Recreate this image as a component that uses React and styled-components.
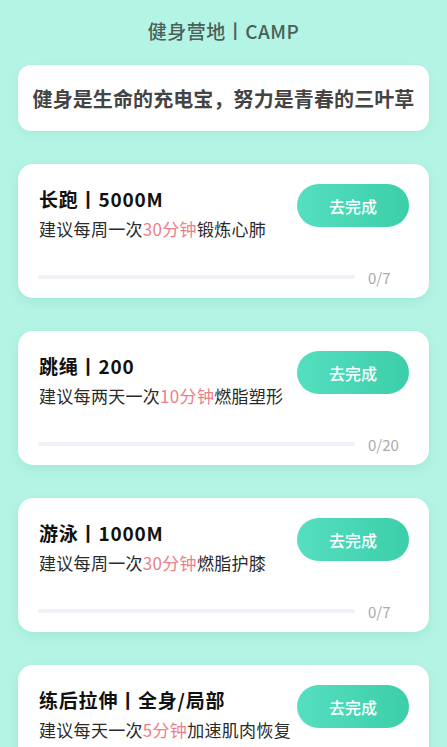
import styled, { createGlobalStyle } from 'styled-components'

const tasks = [
	{ name: '长跑', amount: '5000M', pre: '建议每周一次', time: '30分钟', post: '锻炼心肺', done: 0, total: 7 },
	{ name: '跳绳', amount: '200', pre: '建议每两天一次', time: '10分钟', post: '燃脂塑形', done: 0, total: 20 },
	{ name: '游泳', amount: '1000M', pre: '建议每周一次', time: '30分钟', post: '燃脂护膝', done: 0, total: 7 },
	{ name: '练后拉伸', amount: '全身/局部', pre: '建议每天一次', time: '5分钟', post: '加速肌肉恢复', done: 0, total: 7 },
]

const GlobalStyle = createGlobalStyle`
	html, body {
		margin: 0;
		padding: 0;
		background: #b4f4e4;
		font-family: "Noto Sans CJK SC", "Noto Sans", sans-serif;
	}
`

const App = () => {

	return (

		<Page>

			<GlobalStyle />

			<Heading>健身营地丨CAMP</Heading>

			<Quote>健身是生命的充电宝，努力是青春的三叶草</Quote>

			<List>

				{tasks.map((t) => (

					<Card key={t.name}>

						<div className="top">

							<div className="info">

								<h3>{t.name}丨{t.amount}</h3>

								<p>{t.pre}<span>{t.time}</span>{t.post}</p>

							</div>

							<GoButton>去完成</GoButton>

						</div>

						<div className="progress">

							<div className="bar">

								<div className="fill" style={{ width: `${(t.done / t.total) * 100}%` }}></div>

							</div>

							<span className="count">{t.done}/{t.total}</span>

						</div>

					</Card>

				))}

			</List>

		</Page>

	)

}

const Page = styled.div`
	min-height: 747px;
	padding: 18px 18px 40px;
	box-sizing: border-box;
	background: #b4f4e4;
`

const Heading = styled.h1`
	margin: 0 0 21px;
	text-align: center;
	font-size: 19px;
	line-height: 26px;
	font-weight: 500;
	color: #4b605a;
	letter-spacing: 0.5px;
`

const Quote = styled.div`
	background: #fff;
	border-radius: 13px;
	height: 66px;
	display: flex;
	align-items: center;
	justify-content: center;
	font-size: 20px;
	font-weight: 700;
	color: #444;
	letter-spacing: 0.1px;
	box-shadow: 0 3px 10px rgba(40, 160, 130, 0.1);
`

const List = styled.div`
	margin-top: 33px;
	display: flex;
	flex-direction: column;
	gap: 33px;
`

const Card = styled.div`
	background: #fff;
	border-radius: 15px;
	height: 134px;
	box-sizing: border-box;
	padding: 20px 20px 0 21px;
	box-shadow: 0 4px 12px rgba(40, 160, 130, 0.12);

	.top {
		display: flex;
		justify-content: space-between;
		align-items: flex-start;

		.info {
			padding-top: 2px;

			h3 {
				margin: 0;
				font-size: 19px;
				line-height: 26px;
				font-weight: 700;
				color: #111;
				letter-spacing: 0.8px;
			}

			p {
				margin: 4px 0 0;
				font-size: 17px;
				line-height: 26px;
				color: #2a2a2a;
				letter-spacing: 0.3px;

				span {
					color: #ec7f8a;
				}
			}
		}
	}

	.progress {
		margin-top: 25px;
		display: flex;
		align-items: center;
		height: 20px;
		margin-left: -1px;

		.bar {
			width: 317px;
			height: 4px;
			border-radius: 2px;
			background: #f1f1f8;
			overflow: hidden;

			.fill {
				height: 100%;
				background: #45d6b4;
			}
		}

		.count {
			margin-left: 13px;
			font-size: 15px;
			color: #aaa;
		}
	}
`

const GoButton = styled.button`
	width: 112px;
	height: 43px;
	border: none;
	border-radius: 22px;
	background: linear-gradient(90deg, #55dfc0, #3ccea9);
	color: #fff;
	font-family: inherit;
	font-size: 16px;
	font-weight: 500;
	cursor: pointer;
	flex-shrink: 0;
`

export default App
